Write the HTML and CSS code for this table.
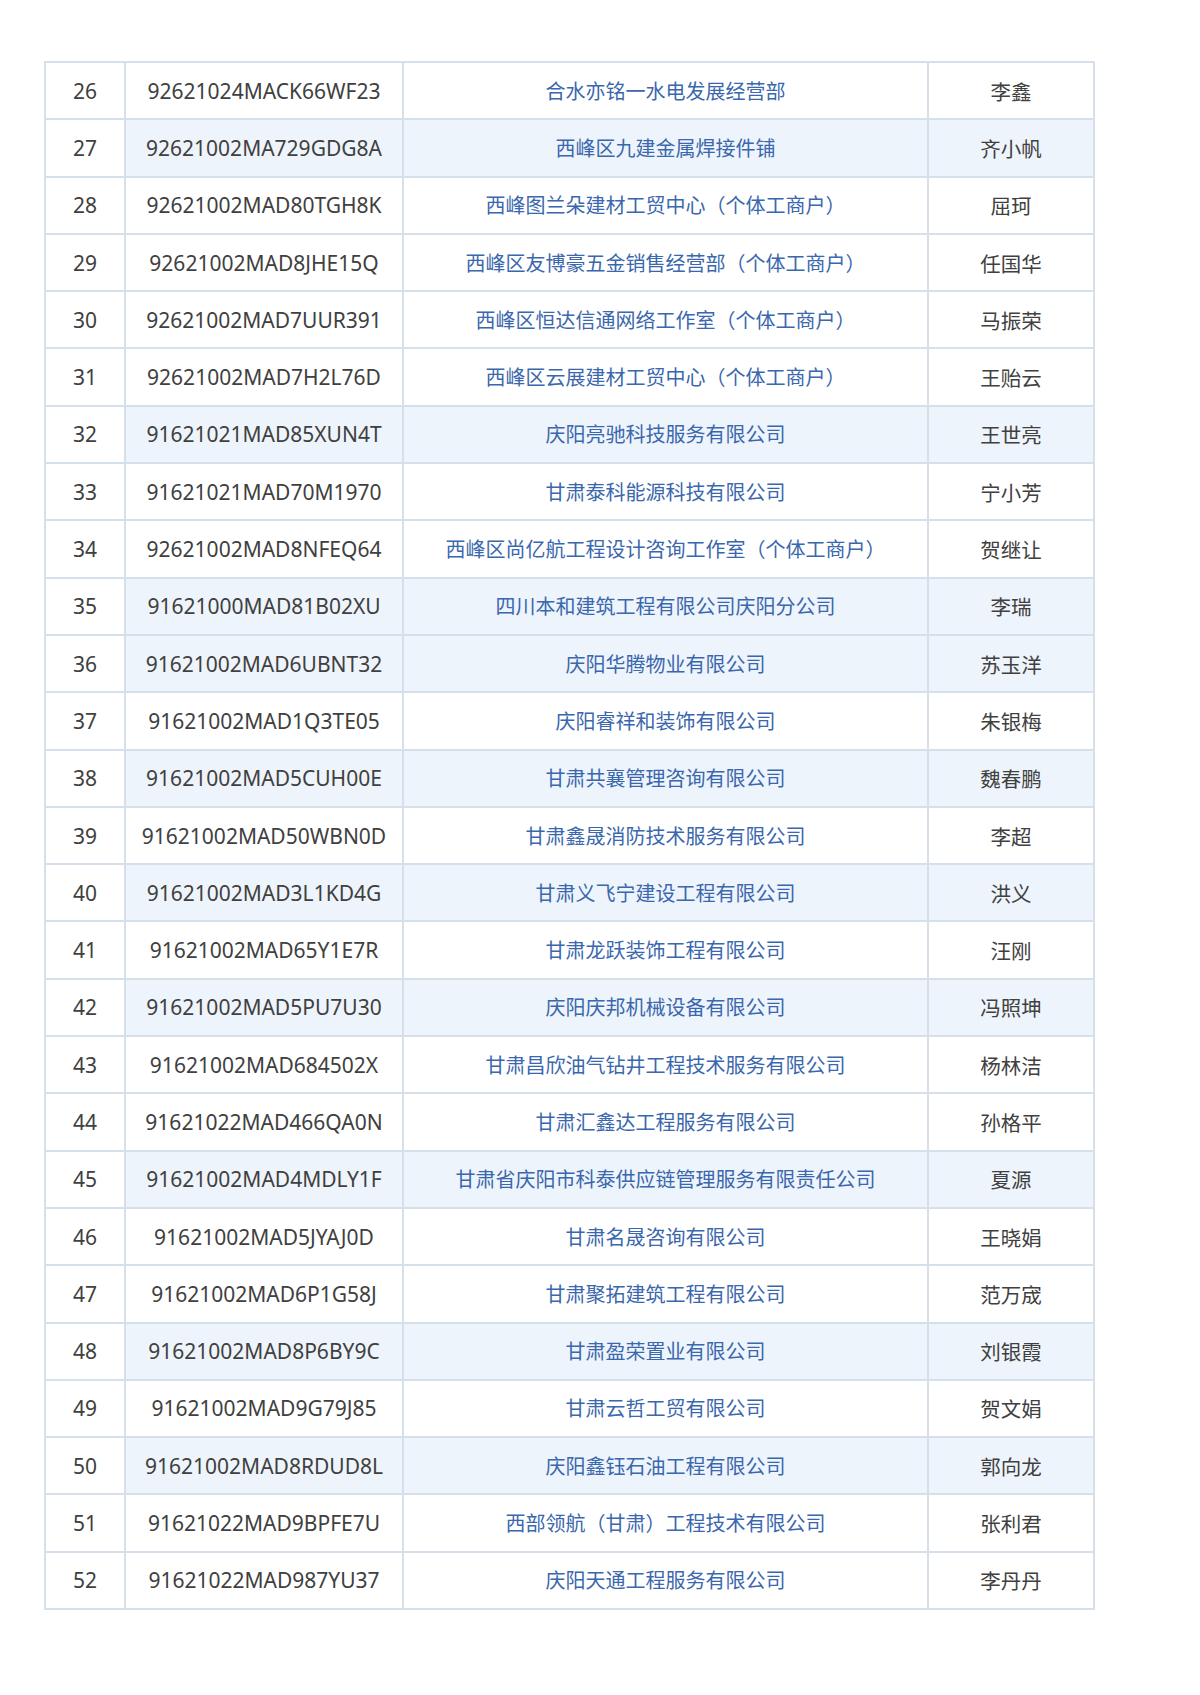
FILE: index.html
```html
<!DOCTYPE html>
<html lang="zh-CN">
<head>
<meta charset="utf-8">
<title>名单</title>
<link rel="stylesheet" href="styles.css">
</head>
<body>
<div class="page">
<table class="list">
<colgroup><col class="c-no"><col class="c-code"><col class="c-name"><col class="c-person"></colgroup>
<tbody>
<tr><td class="no">26</td><td class="code">92621024MACK66WF23</td><td class="name">合水亦铭一水电发展经营部</td><td class="person">李鑫</td></tr>
<tr class="hl"><td class="no">27</td><td class="code">92621002MA729GDG8A</td><td class="name">西峰区九建金属焊接件铺</td><td class="person">齐小帆</td></tr>
<tr><td class="no">28</td><td class="code">92621002MAD80TGH8K</td><td class="name">西峰图兰朵建材工贸中心（个体工商户）</td><td class="person">屈珂</td></tr>
<tr><td class="no">29</td><td class="code">92621002MAD8JHE15Q</td><td class="name">西峰区友博豪五金销售经营部（个体工商户）</td><td class="person">任国华</td></tr>
<tr><td class="no">30</td><td class="code">92621002MAD7UUR391</td><td class="name">西峰区恒达信通网络工作室（个体工商户）</td><td class="person">马振荣</td></tr>
<tr><td class="no">31</td><td class="code">92621002MAD7H2L76D</td><td class="name">西峰区云展建材工贸中心（个体工商户）</td><td class="person">王贻云</td></tr>
<tr class="hl"><td class="no">32</td><td class="code">91621021MAD85XUN4T</td><td class="name">庆阳亮驰科技服务有限公司</td><td class="person">王世亮</td></tr>
<tr><td class="no">33</td><td class="code">91621021MAD70M1970</td><td class="name">甘肃泰科能源科技有限公司</td><td class="person">宁小芳</td></tr>
<tr><td class="no">34</td><td class="code">92621002MAD8NFEQ64</td><td class="name">西峰区尚亿航工程设计咨询工作室（个体工商户）</td><td class="person">贺继让</td></tr>
<tr class="hl"><td class="no">35</td><td class="code">91621000MAD81B02XU</td><td class="name">四川本和建筑工程有限公司庆阳分公司</td><td class="person">李瑞</td></tr>
<tr class="hl"><td class="no">36</td><td class="code">91621002MAD6UBNT32</td><td class="name">庆阳华腾物业有限公司</td><td class="person">苏玉洋</td></tr>
<tr><td class="no">37</td><td class="code">91621002MAD1Q3TE05</td><td class="name">庆阳睿祥和装饰有限公司</td><td class="person">朱银梅</td></tr>
<tr class="hl"><td class="no">38</td><td class="code">91621002MAD5CUH00E</td><td class="name">甘肃共襄管理咨询有限公司</td><td class="person">魏春鹏</td></tr>
<tr><td class="no">39</td><td class="code">91621002MAD50WBN0D</td><td class="name">甘肃鑫晟消防技术服务有限公司</td><td class="person">李超</td></tr>
<tr class="hl"><td class="no">40</td><td class="code">91621002MAD3L1KD4G</td><td class="name">甘肃义飞宁建设工程有限公司</td><td class="person">洪义</td></tr>
<tr><td class="no">41</td><td class="code">91621002MAD65Y1E7R</td><td class="name">甘肃龙跃装饰工程有限公司</td><td class="person">汪刚</td></tr>
<tr class="hl"><td class="no">42</td><td class="code">91621002MAD5PU7U30</td><td class="name">庆阳庆邦机械设备有限公司</td><td class="person">冯照坤</td></tr>
<tr><td class="no">43</td><td class="code">91621002MAD684502X</td><td class="name">甘肃昌欣油气钻井工程技术服务有限公司</td><td class="person">杨林洁</td></tr>
<tr><td class="no">44</td><td class="code">91621022MAD466QA0N</td><td class="name">甘肃汇鑫达工程服务有限公司</td><td class="person">孙格平</td></tr>
<tr class="hl"><td class="no">45</td><td class="code">91621002MAD4MDLY1F</td><td class="name">甘肃省庆阳市科泰供应链管理服务有限责任公司</td><td class="person">夏源</td></tr>
<tr><td class="no">46</td><td class="code">91621002MAD5JYAJ0D</td><td class="name">甘肃名晟咨询有限公司</td><td class="person">王晓娟</td></tr>
<tr><td class="no">47</td><td class="code">91621002MAD6P1G58J</td><td class="name">甘肃聚拓建筑工程有限公司</td><td class="person">范万宬</td></tr>
<tr class="hl"><td class="no">48</td><td class="code">91621002MAD8P6BY9C</td><td class="name">甘肃盈荣置业有限公司</td><td class="person">刘银霞</td></tr>
<tr><td class="no">49</td><td class="code">91621002MAD9G79J85</td><td class="name">甘肃云哲工贸有限公司</td><td class="person">贺文娟</td></tr>
<tr class="hl"><td class="no">50</td><td class="code">91621002MAD8RDUD8L</td><td class="name">庆阳鑫钰石油工程有限公司</td><td class="person">郭向龙</td></tr>
<tr><td class="no">51</td><td class="code">91621022MAD9BPFE7U</td><td class="name">西部领航（甘肃）工程技术有限公司</td><td class="person">张利君</td></tr>
<tr><td class="no">52</td><td class="code">91621022MAD987YU37</td><td class="name">庆阳天通工程服务有限公司</td><td class="person">李丹丹</td></tr>
</tbody>
</table>
</div>
</body>
</html>
```
FILE: styles.css
```css
html, body {
  margin: 0;
  padding: 0;
  background: #ffffff;
}

.page {
  padding: 61px 0 0 44px;
}

.list {
  border-collapse: collapse;
  table-layout: fixed;
  width: 1049px;
  font-family: "Noto Sans", "Noto Sans CJK SC", sans-serif;
  font-size: 21px;
  color: #404040;
}

.c-no { width: 80px; }
.c-code { width: 278px; }
.c-name { width: 525px; }
.c-person { width: 166px; }

.list td {
  border: 2px solid #d6e0ea;
  height: 55.3px;
  padding: 0 4px;
  text-align: center;
  vertical-align: middle;
  white-space: nowrap;
  line-height: 24px;
}

.list tr.hl td.code,
.list tr.hl td.name,
.list tr.hl td.person {
  background: #eef4fb;
}

.list td.name {
  color: #3a67ad;
  font-family: "Noto Sans CJK SC", sans-serif;
  font-size: 20px;
}

.list td.person {
  font-family: "Noto Sans CJK SC", sans-serif;
  font-size: 20.5px;
}
```
